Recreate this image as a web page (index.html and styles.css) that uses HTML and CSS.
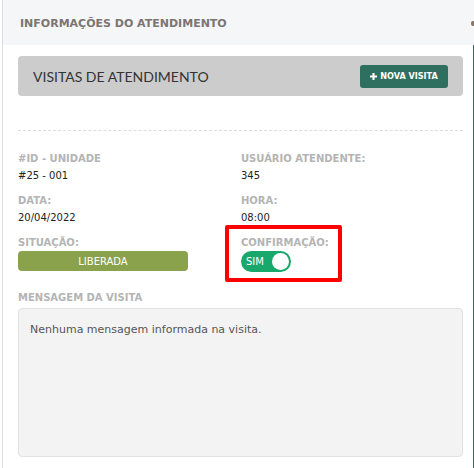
FILE: index.html
```html
<!DOCTYPE html>
<html lang="pt-BR">
<head>
  <meta charset="UTF-8" />
  <meta name="viewport" content="width=device-width, initial-scale=1.0"/>
  <title>Informações do Atendimento</title>
  <link rel="stylesheet" href="styles.css">
</head>
<body>
  <div class="panel">
    <div class="panel-header">
      <span>INFORMAÇÕES DO ATENDIMENTO</span>
      <span class="header-dot"></span>
    </div>

    <div class="panel-body">
      <div class="visits-bar">
        <h2>VISITAS DE ATENDIMENTO</h2>
        <button class="btn-new">
          <svg class="plus" viewBox="0 0 8 8" width="7" height="7"><path d="M2.8 0h2.4v2.8H8v2.4H5.2V8H2.8V5.2H0V2.8h2.8z" fill="#fff"/></svg>
          NOVA VISITA
        </button>
      </div>

      <div class="divider"></div>

      <div class="info-grid">
        <div class="field">
          <div class="label">#ID - UNIDADE</div>
          <div class="value">#25 - 001</div>
        </div>
        <div class="field">
          <div class="label">USUÁRIO ATENDENTE:</div>
          <div class="value">345</div>
        </div>
        <div class="field">
          <div class="label">DATA:</div>
          <div class="value">20/04/2022</div>
        </div>
        <div class="field">
          <div class="label">HORA:</div>
          <div class="value">08:00</div>
        </div>
        <div class="field">
          <div class="label">SITUAÇÃO:</div>
          <div class="badge">LIBERADA</div>
        </div>
        <div class="field field-highlight">
          <div class="label">CONFIRMAÇÃO:</div>
          <div class="toggle">
            <span>SIM</span>
            <span class="knob"></span>
          </div>
        </div>
      </div>

      <div class="label msg-label">MENSAGEM DA VISITA</div>
      <div class="message">Nenhuma mensagem informada na visita.</div>
    </div>
  </div>
</body>
</html>
```

FILE: styles.css
```css
:root {
  --label: #b4b4b4;
  --text: #222;
  --border: #dedede;
  --green: #2f6f5f;
}

* {
  box-sizing: border-box;
  margin: 0;
  padding: 0;
}

body {
  font-family: "DejaVu Sans", Verdana, sans-serif;
  background: #fff;
  color: var(--text);
  padding-left: 2px;
}

.panel {
  border-left: 1px solid var(--border);
  height: 468px;
  display: flex;
  flex-direction: column;
  overflow: hidden;
}

.panel-header {
  flex-shrink: 0;
  height: 45px;
  background: #f5f6f8;
  display: flex;
  align-items: center;
  justify-content: space-between;
  padding: 2px 0 0 17px;
  font-size: 11px;
  font-weight: bold;
  color: #7b7470;
}

.header-dot {
  width: 3px;
  height: 5px;
  background: #8a7767;
  border-radius: 2px 0 0 2px;
}

.panel-body {
  flex: 1;
  padding: 11px 10px 0 15px;
  border-right: 1px solid var(--green);
}

.visits-bar {
  height: 40px;
  background: #cccccc;
  border-radius: 4px;
  display: flex;
  align-items: center;
  justify-content: space-between;
  padding: 0 15px;
}

.visits-bar h2 {
  font-family: Lato, sans-serif;
  font-weight: 400;
  font-size: 14px;
  color: #333;
}

.btn-new {
  height: 23px;
  width: 88px;
  border: none;
  border-radius: 3px;
  background: var(--green);
  color: #fff;
  font-family: "DejaVu Sans Condensed", "DejaVu Sans", sans-serif;
  font-size: 9px;
  font-weight: bold;
  display: flex;
  align-items: center;
  justify-content: center;
  gap: 3px;
}

.divider {
  border-top: 1px dashed #dcdcdc;
  margin-top: 34px;
}

.info-grid {
  display: grid;
  grid-template-columns: 223px 1fr;
  row-gap: 14px;
  margin-top: 22px;
}

.label {
  font-size: 10px;
  font-weight: bold;
  color: var(--label);
}

.value {
  font-size: 10px;
  margin-top: 6px;
}

.badge {
  margin-top: 3px;
  width: 170px;
  height: 20px;
  background: #8aa24c;
  border-radius: 4px;
  color: #fff;
  font-size: 10px;
  display: flex;
  align-items: center;
  justify-content: center;
}

.field-highlight {
  position: relative;
}

.field-highlight::before {
  content: "";
  position: absolute;
  box-sizing: border-box;
  left: -16px;
  top: -12px;
  width: 117px;
  height: 57px;
  border: 4px solid #ff0000;
  border-radius: 2px;
}

.toggle {
  margin-top: 3px;
  width: 50px;
  height: 21px;
  background: #18a86b;
  border-radius: 11px;
  display: flex;
  align-items: center;
  justify-content: space-between;
  padding: 0 2px 0 5px;
  color: #fff;
  font-size: 10px;
}

.knob {
  width: 17px;
  height: 17px;
  border-radius: 50%;
  background: #fff;
}

.msg-label {
  margin-top: 20px;
}

.message {
  margin-top: 5px;
  height: 149px;
  background: #f3f3f3;
  border: 1px solid #e2e2e2;
  border-radius: 4px;
  padding: 14px 11px;
  font-size: 11px;
  color: #555;
}
```
